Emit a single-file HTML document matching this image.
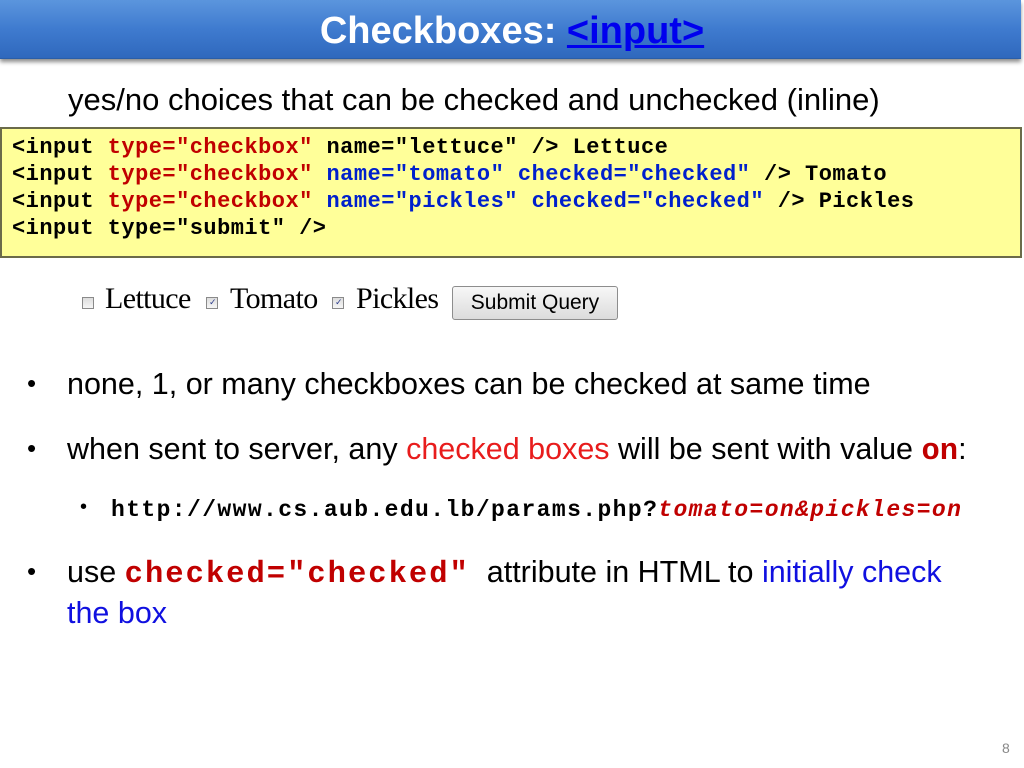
<!DOCTYPE html>
<html><head><meta charset="utf-8"><style>
body{margin:0;width:1024px;height:768px;background:#fff;position:relative;overflow:hidden;font-family:"Liberation Sans",sans-serif}
.t{position:absolute;white-space:nowrap}
#bar{position:absolute;left:0;top:0;width:1021px;height:58px;background:linear-gradient(#5b95dd,#3f7bcf 50%,#2f68bd);box-shadow:0 3px 4px rgba(0,0,0,.45);border-bottom:1px solid #2a5ea8}
#title{left:0;width:1024px;text-align:center;top:10px;font-size:38px;font-weight:bold;color:#fff}
#title a{color:#0000ee;text-decoration:underline}
.code{position:absolute;left:0;top:127px;width:1018px;height:127px;background:#ffff99;border:2px solid #6b6b4a}
.cl{position:absolute;left:10px;font-family:"Liberation Mono",monospace;font-weight:bold;font-size:22px;letter-spacing:0.47px;white-space:nowrap}
.r{color:#c00000}.b{color:#0020cc}
.bl{font-size:30.5px;color:#000}
.dot{position:absolute;font-size:26px}
.cb{position:absolute;width:10px;height:10px;border:1px solid #8a8a8a;background:linear-gradient(#ddd,#f6f6f6);top:297px}
.cb i{position:absolute;left:2px;top:-1px;font-size:9px;line-height:10px;color:#2a3a8a;font-style:normal}
.ser{position:absolute;top:282px;font-family:"Liberation Serif",serif;font-size:30px;letter-spacing:-0.6px}
</style></head><body>
<div id="bar"></div>
<div class="t" id="title">Checkboxes: <a>&lt;input&gt;</a></div>
<div class="t" style="left:68px;top:82px;font-size:31px">yes/no choices that can be checked and unchecked (inline)</div>
<div class="code">
<div class="cl" style="top:6px">&lt;input <span class="r">type="checkbox"</span> name="lettuce" /&gt; Lettuce</div>
<div class="cl" style="top:33px">&lt;input <span class="r">type="checkbox"</span> <span class="b">name="tomato" checked="checked"</span> /&gt; Tomato</div>
<div class="cl" style="top:60px">&lt;input <span class="r">type="checkbox"</span> <span class="b">name="pickles" checked="checked"</span> /&gt; Pickles</div>
<div class="cl" style="top:87px">&lt;input type="submit" /&gt;</div>
</div>
<div class="cb" style="left:82px"></div>
<div class="ser" style="left:105px">Lettuce</div>
<div class="cb" style="left:206px"><i>✓</i></div>
<div class="ser" style="left:230px">Tomato</div>
<div class="cb" style="left:332px"><i>✓</i></div>
<div class="ser" style="left:356px">Pickles</div>
<div style="position:absolute;left:452px;top:286px;width:164px;height:32px;border:1px solid #8d8d8d;border-radius:3px;background:linear-gradient(#f7f7f7,#dcdcdc);font-size:21px;text-align:center;line-height:32px">Submit Query</div>
<div class="dot" style="left:27px;top:368px">•</div>
<div class="t bl" style="left:67px;top:367px">none, 1, or many checkboxes can be checked at same time</div>
<div class="dot" style="left:27px;top:433px">•</div>
<div class="t bl" style="left:67px;top:432px">when sent to server, any <span style="color:#e81c1c">checked boxes</span> will be sent with value <b style="font-family:'Liberation Mono',monospace;color:#c00000">on</b>:</div>
<div class="dot" style="left:80px;top:496px;font-size:20px">•</div>
<div class="t" style="left:111px;top:497px;font-family:'Liberation Mono',monospace;font-weight:bold;font-size:23px;letter-spacing:1.4px">http://www.cs.aub.edu.lb/params.php?<i style="color:#c00000">tomato=on&amp;pickles=on</i></div>
<div class="dot" style="left:27px;top:556px">•</div>
<div class="t bl" style="left:67px;top:555px">use <b style="font-family:'Liberation Mono',monospace;color:#c00000;letter-spacing:2px">checked="checked"</b>&nbsp; attribute in HTML to <span style="color:#1010e0">initially check</span></div>
<div class="t bl" style="left:67px;top:596px;color:#1010e0">the box</div>
<div class="t" style="left:1002px;top:740px;font-size:14px;color:#888">8</div>
</body></html>
